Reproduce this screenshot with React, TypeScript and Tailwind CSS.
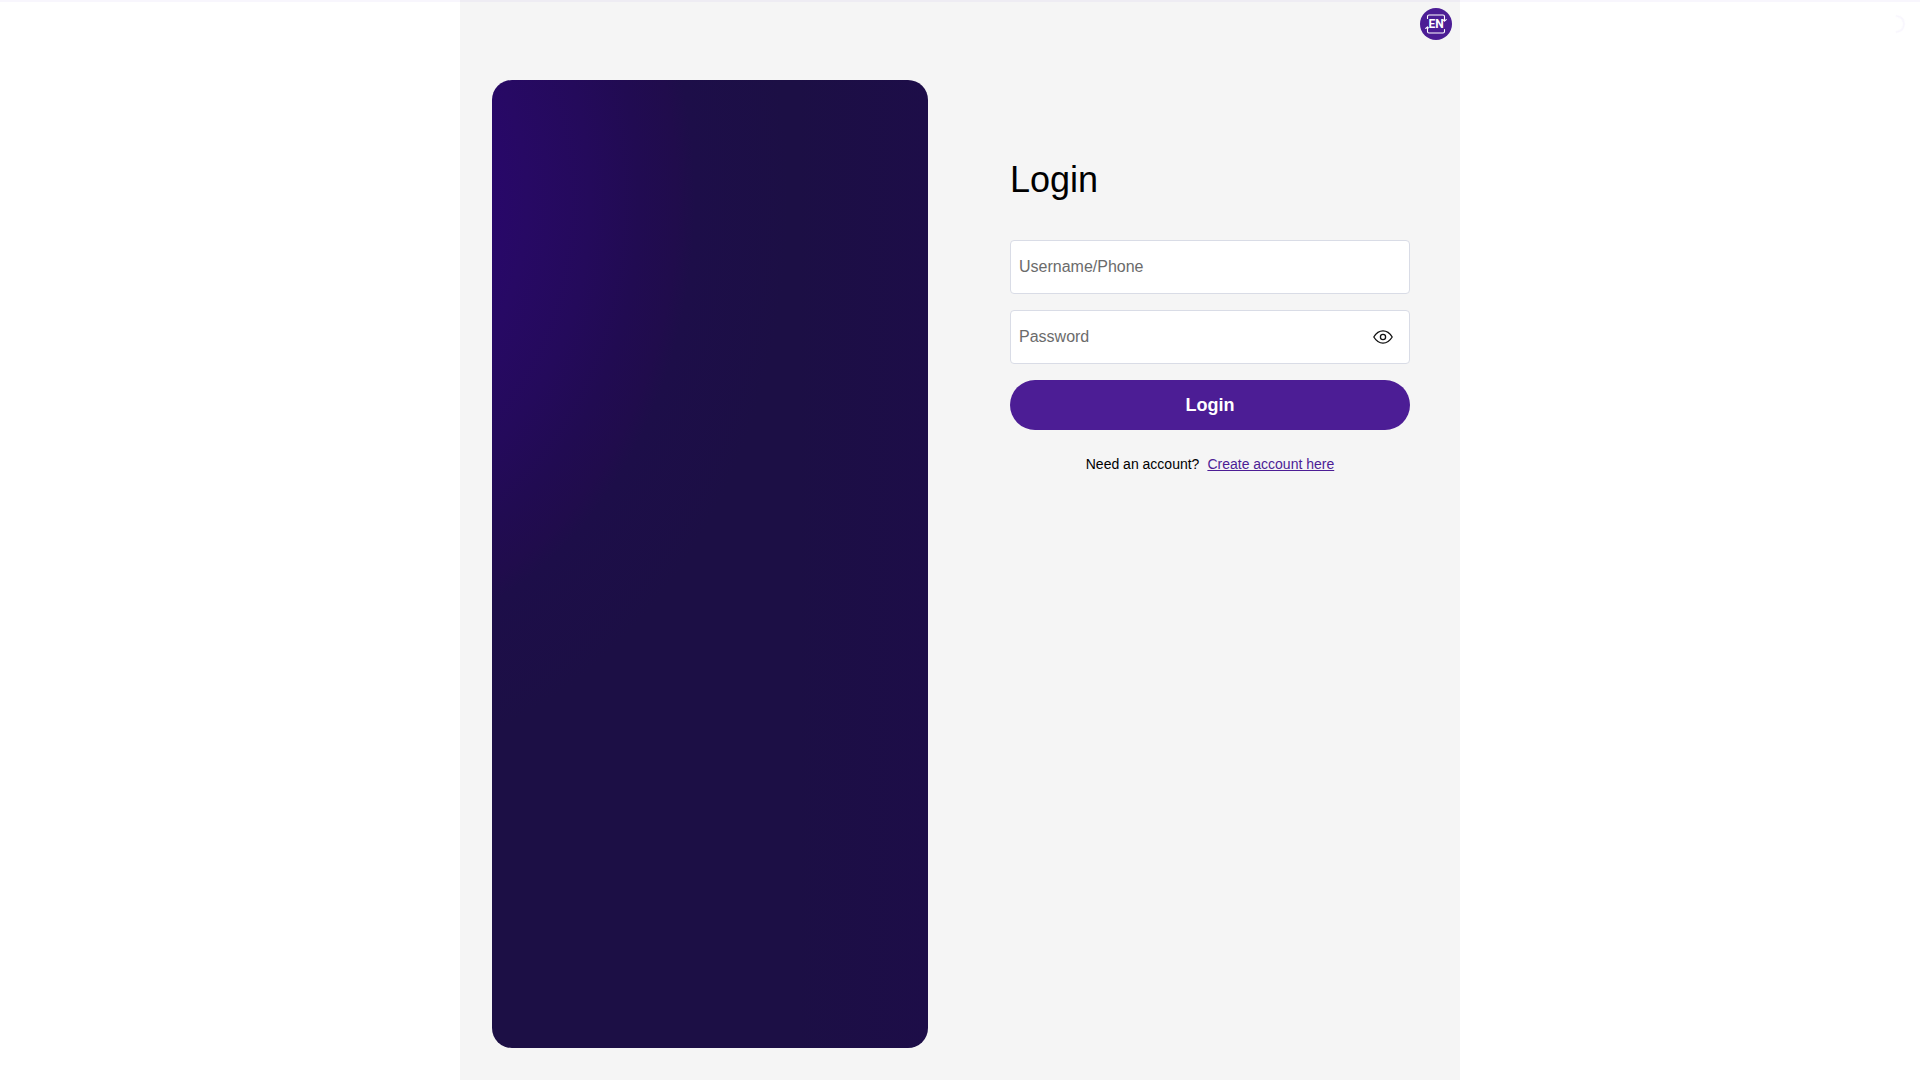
import { useState } from "react";

function LanguageIcon() {
  return (
    <svg viewBox="0 0 32 32" className="block size-8" aria-hidden="true">
      <circle cx="16" cy="16" r="16" fill="#4c1d95" />
      <g fill="none" stroke="#fff" strokeWidth="1.1" strokeLinecap="round" strokeLinejoin="round">
        <path d="M7.5 10.500V8.500Q7.500 7 9 7H23Q24.500 7 24.500 8.500V12.800" />
        <path d="M23.400 12L24.500 13.100L26.300 11.600" />
        <path d="M24.500 21.500V23.500Q24.500 25 23 25H9Q7.500 25 7.500 23.500V19.200" />
        <path d="M5.700 20.500L7.500 18.900L8.400 19.900" />
      </g>
      <text
        x="16"
        y="20.4"
        textAnchor="middle"
        fill="#fff"
        fontFamily="Roboto, sans-serif"
        fontWeight="700"
        fontSize="12"
      >
        EN
      </text>
    </svg>
  );
}

function EyeIcon() {
  return (
    <svg viewBox="0 0 20 20" className="block size-5" fill="none" stroke="#111" strokeWidth="1.3" aria-hidden="true">
      <path
        strokeLinejoin="round"
        d="M.8 10C3.400 5.700 6.300 3.900 10 3.900S16.600 5.700 19.200 10C16.600 14.300 13.700 16.100 10 16.100S3.400 14.300 .8 10Z"
      />
      <circle cx="10" cy="10" r="2.6" />
    </svg>
  );
}

const fieldClass =
  "block h-[54px] w-full rounded border border-[#d9dce6] bg-white px-2 text-base text-black outline-none placeholder:text-[#6b6b6b]";

export default function App() {
  const [visible, setVisible] = useState(false);

  return (
    <div className="min-h-screen bg-white font-['Liberation_Sans',Arial,sans-serif] text-black">
      <div className="fixed inset-x-0 top-0 z-10 h-0.5 bg-[#4c1dc0]/4" />
      <div className="fixed top-[15px] right-[15px] z-10 size-[18px] rotate-135 rounded-full border-2 border-transparent border-t-[#4c1dc0]/4 border-l-[#4c1dc0]/4" />

      <div className="mx-auto flex min-h-screen max-w-[1000px] flex-col bg-[#f5f5f5]">
        <header className="flex justify-end p-2">
          <button type="button" aria-label="Change language" className="rounded-full">
            <LanguageIcon />
          </button>
        </header>

        <main className="grid grow grid-cols-2">
          <div className="flex p-8">
            <div className="grow rounded-[20px] bg-[#1c0f45] bg-[radial-gradient(350px_450px_at_-140px_120px,#28076a_38%,#270964_50%,#240a5b_68%,#210b52_82%,#200c4c_93%,#1d0e49_98%,#1c0f4500_125%),linear-gradient(90deg,#1c0f45_70%,#1d0d48)]" />
          </div>

          <form className="mx-auto w-full max-w-[400px] pt-28" onSubmit={(e) => e.preventDefault()}>
            <h1 className="text-4xl leading-10">Login</h1>
            <div className="mt-10 flex flex-col gap-4">
              <input type="text" aria-label="Username/Phone" placeholder="Username/Phone" className={fieldClass} />
              <div className="relative">
                <input
                  type={visible ? "text" : "password"}
                  aria-label="Password"
                  placeholder="Password"
                  className={fieldClass}
                />
                <button
                  type="button"
                  aria-label="Show password"
                  onClick={() => setVisible(!visible)}
                  className="absolute inset-y-0 right-[17px] flex items-center"
                >
                  <EyeIcon />
                </button>
              </div>
              <button type="submit" className="h-[50px] w-full rounded-full bg-[#4c1d95] text-lg font-bold text-white">
                Login
              </button>
            </div>
            <p className="mt-6 flex justify-center gap-2 text-sm">
              <span>Need an account?</span>
              <a href="#create" className="text-[#4c1d95] underline">
                Create account here
              </a>
            </p>
          </form>
        </main>
      </div>
    </div>
  );
}
